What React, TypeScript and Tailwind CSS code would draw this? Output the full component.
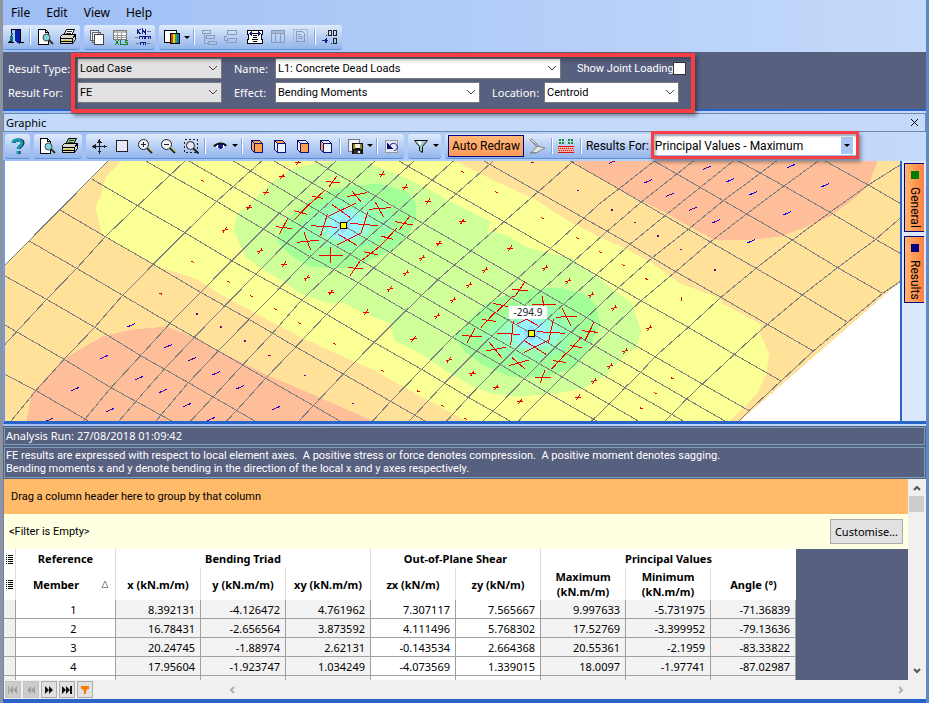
import type { ReactNode } from "react";

const UI = "font-['Noto_Sans','Open_Sans',sans-serif]";
const NARROW = "font-['Roboto','Noto_Sans',sans-serif]";

/* ---------- toolbar icons, drawn on a 18 x 18 grid ---------- */

function Ico({ children, w = 18 }: { children: ReactNode; w?: number }) {
  return (
    <svg width={w} height="18" viewBox={`0 0 ${w} 18`} fill="none" shapeRendering="crispEdges" aria-hidden="true" className="shrink-0">
      {children}
    </svg>
  );
}

const ExitIcon = () => (
  <Ico>
    <path d="M4.500 12V1.500h9V14" stroke="#000" />
    <path d="M5 2h8v11H5z" fill="#9fd0f4" />
    <path d="M8 2h5v14l-5-3z" fill="#0a1fa8" />
    <path d="M3 8h3v6H3zM4 5h2v2H4z" fill="#0c6f78" />
    <path d="M1 14.500h6M12 14.500h5M2 13.500h2" stroke="#000" />
  </Ico>
);
const PreviewIcon = () => (
  <Ico>
    <path d="M2.500 1.500h7l3 3v12h-10z" fill="#fff" stroke="#000" />
    <path d="M9.500 1.500v3h3" stroke="#000" />
    <circle cx="10.500" cy="9.500" r="3.500" fill="#7fd4dc" stroke="#444" shapeRendering="auto" />
    <path d="M13 12l4 4" stroke="#333" strokeWidth="2" shapeRendering="auto" />
  </Ico>
);
const PrinterIcon = ({ paper = "#fff" }: { paper?: string }) => (
  <Ico>
    <path d="M4.500 7.500l3-6h8l-3 6z" fill={paper} stroke="#000" shapeRendering="auto" />
    <path d="M8 3.500h5M7 5.500h5" stroke="#333" />
    <path d="M1.500 8.500l2-2h13v5l-3 4h-12z" fill="#d9d6c8" stroke="#000" shapeRendering="auto" />
    <path d="M1.500 10.500h12l3-4M2 13.500h11M13.500 10.500v5" stroke="#000" />
    <path d="M4 12h6v1H4z" fill="#d8c800" />
    <path d="M3 15h10v1H3z" fill="#000" />
  </Ico>
);
const CopyIcon = () => (
  <Ico>
    <path d="M2.500 2.500h8v10h-8zM4.500 4.500h8v10h-8z" fill="#e9f1fd" stroke="#666" />
    <path d="M6.500 6.500h9v10h-9z" fill="#fff" stroke="#444" />
  </Ico>
);
const XlsIcon = () => (
  <Ico>
    <path d="M2.500 2.500h13v9h-13z" fill="#fff" stroke="#777" />
    <path d="M3 3h12v2H3z" fill="#b9b9b9" />
    <path d="M3 7.500h12M3 9.500h12M6.500 5v6M10.500 5v6" stroke="#999" />
    <path d="M4 12l4 5M8 12l-4 5M9.500 12v4.500h3M17 12.500h-3v2h2.500v2H13" stroke="#0a8a1e" />
  </Ico>
);
const UnitsIcon = () => (
  <Ico>
    <path d="M3.500 1v5M6.500 1l-3 2 3 3M8.500 6V1l3 5V1" stroke="#1a1a8c" />
    <path d="M13 3.500h4M1 9.500h3M2 15.500h3M13 15.500h3" stroke="#777" />
    <path d="M5.500 11V8.500h5V11M8 9v2M11.500 11V8.500h5V11M14 9v2M6.500 17v-2.500h5V17M9 15v2" stroke="#1a1a8c" />
  </Ico>
);
const PaletteIcon = () => (
  <Ico>
    <path d="M1.500 2.500h12v12h-12z" fill="#fff" stroke="#000" />
    <path d="M7 5h3v10H7z" fill="#e03a18" />
    <path d="M10 5h2v10h-2z" fill="#f4d800" />
    <path d="M12 5h2v10h-2z" fill="#19b33a" />
    <path d="M14 5h2v10h-2z" fill="#1c6fd8" />
    <path d="M7 5.500h9v10H7z" stroke="#000" />
  </Ico>
);
const TreeIcon = () => (
  <Ico>
    <path d="M2.500 2.500h8v3h-8zM6.500 7.500h8v3h-8zM8.500 13.500h8v3h-8zM4.500 6v9h4M4.500 9.500h2" stroke="#8b9bb8" />
  </Ico>
);
const SplitIcon = () => (
  <Ico>
    <path d="M4.500 2.500h9v4h-9zM4.500 10.500h9v4h-9zM4 8.500H1.500v4H4" stroke="#8b9bb8" />
  </Ico>
);
const FitIcon = () => (
  <Ico>
    <path d="M1.500 2.500h15v4h-1v5h1v4h-15v-4h1v-5h-1z" fill="#fff" stroke="#000" />
    <path d="M6 5.500h6M7 7.500h4M7 9.500h4M6 11.500h6M7 13.500h4" stroke="#000" />
    <path d="M6 3v5L3 5.500zM12 3v5l3-2.500z" fill="#1a1a8c" />
  </Ico>
);
const ColumnsIcon = () => (
  <Ico>
    <path d="M2.500 2.500h13v12h-13zM2 5.500h14M6.500 6v9M11.500 6v9" stroke="#8b9bb8" />
    <path d="M3 3h12v2H3z" fill="#a9b8d3" />
  </Ico>
);
const ReportIcon = () => (
  <Ico>
    <path d="M1.500 1.500h14v14h-14z" stroke="#a9b8d3" />
    <path d="M4.500 3.500h6l2 2v8h-8zM6 6.500h3M6 8.500h5M6 10.500h5" stroke="#8b9bb8" />
  </Ico>
);
const DecimalIcon = () => (
  <Ico>
    <path d="M5 7.500h1M7.500 2.500h3v5h-3zM12.500 2.500h3v5h-3zM12.500 10.500h3v5h-3zM10 15.500h1" stroke="#222" />
    <path d="M1 12.500h6M5.500 10v5M4.500 10.500v4" stroke="#1a1a8c" />
  </Ico>
);
const HelpIcon = () => (
  <Ico>
    <path d="M5 6c0-4 9-4 9 0 0 3-4 3-4 6M10 14v3" stroke="#113" strokeWidth="3" shapeRendering="auto" />
    <path d="M4 6c0-4 9-4 9 0 0 3-4 3-4 6M9 14v3" stroke="#129aa6" strokeWidth="3" shapeRendering="auto" />
  </Ico>
);
const MoveIcon = () => (
  <Ico>
    <path d="M9.500 4v11M4 9.500h11" stroke="#222" />
    <path d="M8 5h3L9.500 3zM8 14h3l-1.500 2zM5 8v3L3 9.500zM14 8v3l2-1.500z" fill="#222" stroke="#222" strokeWidth="1" />
  </Ico>
);
const RectIcon = () => (
  <Ico>
    <path d="M3.500 3.500h11v11h-11z" fill="#e6e6fa" stroke="#222" />
  </Ico>
);
const ZoomIcon = ({ plus }: { plus: boolean }) => (
  <Ico>
    <circle cx="7.500" cy="7.500" r="5" fill="#eef3fd" stroke="#222" shapeRendering="auto" />
    <path d={plus ? "M5 7.500h5M7.500 5v5" : "M5 7.500h5"} stroke="#222" />
    <path d="M11 11l5 5" stroke="#222" strokeWidth="2" shapeRendering="auto" />
    <path d="M12 10.500l4.500 4.500" stroke="#d8c800" shapeRendering="auto" />
  </Ico>
);
const ZoomAreaIcon = () => (
  <Ico>
    <path d="M2.500 2.500h13v13h-13z" stroke="#222" strokeDasharray="2 2" />
    <circle cx="8.500" cy="8.500" r="4" fill="#e6e6fa" stroke="#222" shapeRendering="auto" />
    <path d="M11.500 11.500l5 5" stroke="#222" strokeWidth="2" shapeRendering="auto" />
  </Ico>
);
const EyeIcon = () => (
  <Ico>
    <path d="M2 9c3-4 10-5 14-1l-2 2c-2-2-7-3-10 0z" fill="#111" shapeRendering="auto" />
    <path d="M5 10c2 3 6 3 9 0l-1-2H6z" fill="#fff" />
    <circle cx="9.500" cy="9.500" r="2.500" fill="#111a8c" shapeRendering="auto" />
  </Ico>
);
type Face = "all" | "top" | "front" | "left";
const CubeIcon = ({ face }: { face: Face }) => {
  const o = "#ffa050";
  return (
    <Ico>
      <path d="M3 4l3 3h9l-3-4H5z" fill={face === "all" || face === "top" ? o : "#eaf1fd"} />
      <path d="M3 4l3 3v9l-3-3z" fill={face === "all" || face === "left" ? o : "#eaf1fd"} />
      <path d="M6 7h9v8H6z" fill={face === "all" || face === "front" ? o : "#eaf1fd"} />
      <path d="M6.500 6.500h8v9h-8zM3.500 3.500l3 3M3.500 3.500v9l3 3M3.500 3.500h8l3 3" stroke="#10107c" />
    </Ico>
  );
};
const SaveIcon = () => (
  <Ico>
    <path d="M2.500 2.500h11v12h-11z" fill="#eef3fd" stroke="#777" />
    <path d="M6 6h11v11H6z" fill="#111" />
    <path d="M7 7h2v5H7zM14 7h2v5h-2z" fill="#8a8a14" />
    <path d="M9 7h5v4H9z" fill="#eee" />
    <path d="M8 13h7v4H8z" fill="#333" />
    <path d="M12 14h2v2h-2z" fill="#fff" />
  </Ico>
);
const UndoIcon = () => (
  <Ico>
    <path d="M2.500 3.500h12v12h-12z" fill="#e6e6fa" stroke="#999" />
    <path d="M6 9.500c2-4 7-4 8-1 1 3-1 5-3 5" stroke="#10107c" shapeRendering="auto" />
    <path d="M4 6v6h6z" fill="#10107c" />
  </Ico>
);
const FilterIcon = () => (
  <Ico>
    <path d="M2.500 3.500h13l-5 6v6l-3-2v-4z" fill="#9bc9c9" stroke="#111" shapeRendering="auto" />
    <path d="M5 4.500h5l-2 4z" fill="#fff" shapeRendering="auto" />
  </Ico>
);
const BrushIcon = () => (
  <Ico>
    <path d="M2 3l2-1 6 6-1 2zM9 9l8 2-9 5H2c3-1 4-3 7-7z" fill="#e3e3e3" stroke="#888" shapeRendering="auto" />
    <path d="M2 3.500l8 5.500M3 15.500h6" stroke="#888" shapeRendering="auto" />
  </Ico>
);
const LoadIcon = () => (
  <Ico>
    <path d="M2 2h2v2H2zM5 2h2v2H5zM11 2h2v2h-2zM14 2h2v2h-2zM2 5h2v2H2zM5 5h2v2H5zM11 5h2v2h-2zM14 5h2v2h-2z" fill="#168a2a" />
    <path d="M1 9h16v7H1z" fill="#f3b0a8" />
    <path d="M1 9.500h16M1 15.500h16" stroke="#d11" />
    <path d="M1 11.500h16M2 13.500h16" stroke="#d11" strokeDasharray="1 1" />
  </Ico>
);

/* ---------- small building blocks ---------- */

function ToolGroup({ children }: { children: ReactNode }) {
  return (
    <div className="flex h-[25px] items-center rounded-[3px] border-b border-[#5e8fda] bg-gradient-to-b from-[#dfeafc] to-[#92b5ec] px-px">
      {children}
    </div>
  );
}
function Tool({ label, children }: { label: string; children: ReactNode }) {
  return (
    <button type="button" aria-label={label} className="flex h-6 w-[23px] shrink-0 items-center justify-center">
      {children}
    </button>
  );
}
function DropArrow({ label }: { label: string }) {
  return (
    <button type="button" aria-label={label} className="flex h-6 w-2 shrink-0 items-center justify-center">
      <svg width="6" height="3" viewBox="0 0 6 3" aria-hidden="true"><path d="M0 0h6L3 3z" fill="#000" /></svg>
    </button>
  );
}
const Sep = () => <span className="mx-[2px] h-4 w-[2px] shrink-0 border-l border-[#86a5d8] bg-white" />;

function Combo({ id, value, tone, width }: { id: string; value: string; tone: "grey" | "white"; width: string }) {
  return (
    <div className={`relative ${width}`}>
      <select
        id={id}
        defaultValue={value}
        className={`${NARROW} h-[21px] w-full appearance-none border border-[#7a7a7a] pl-[2px] text-[11px] leading-4 text-black ${tone === "grey" ? "bg-[#e1e1e1]" : "bg-white"}`}
      >
        <option>{value}</option>
      </select>
      <svg className="pointer-events-none absolute top-[7px] right-1" width="10" height="7" viewBox="0 0 10 7" fill="none" aria-hidden="true">
        <path d="M1 1l4 4 4-4" stroke="#444" />
      </svg>
    </div>
  );
}

/* ---------- contour plot ---------- */

const gridLines = [
  "15,643 110,693 265,783",
  "15,495 192,598 333,683 515,783",
  "15,348 140,418 284,502 422,587 565,668 765,783",
  "88,243 230,325 368,406 510,490 655,573 797,655 940,737 1020,783",
  "180,150 316,230 460,313 602,397 747,478 900,568 1030,642 1172,724 1275,783",
  "277,58 413,137 555,218 695,302 840,383 980,463 1122,547 1265,628 1405,712 1530,783",
  "437,3 650,124 790,207 930,290 1075,368 1218,452 1358,532 1500,613 1640,697 1790,783",
  "567,3 838,160 1827,732 1915,783",
  "700,3 1030,197 1594,520 1875,683 2050,783",
  "822,3 1922,637 2060,717 2175,783",
  "944,3 1828,512 1965,590 2107,672 2247,752",
  "1197,3 1855,383 1923,422 2065,502 2203,583 2343,663",
  "1452,3 1890,253 2027,335 2163,412 2302,493 2440,573",
  "1710,3 1862,90 2065,208 2268,325 2407,405 2543,487",
  "1963,3 2170,122 2377,240 2513,323 2648,400",
  "2215,3 2352,78 2490,157 2627,238 2700,280",
  "2475,3 2605,75 2700,130",
  "327,0 15,315",
  "555,3 413,137 316,230 230,325 140,418 50,515 15,553",
  "785,3 650,124 555,218 460,313 368,406 284,502 192,598 108,692 33,783",
  "1008,3 838,160 695,302 602,397 510,490 422,587 333,683 250,783",
  "1125,3 908,200 768,342 675,437 583,532 494,626 407,725 357,783",
  "1242,3 1030,197 930,290 840,383 747,478 655,573 565,668 468,783",
  "1360,3 1100,237 1003,328 905,420 820,517 728,615 640,710 572,783",
  "1480,3 1170,277 1075,368 980,463 890,558 797,655 711,750 680,783",
  "1720,3 1318,355 1218,452 1122,547 1030,642 940,737 897,783",
  "1963,3 1855,88 1800,130 1460,440 1358,532 1265,628 1172,724 1118,783",
  "2080,3 1925,125 1820,215 1525,480 1430,572 1335,668 1228,783",
  "2200,3 1995,167 1890,253 1594,520 1500,613 1405,712 1340,783",
  "2330,3 2170,122 2065,208 1958,292 1855,383 1665,562 1450,783",
  "2455,3 2352,78 2240,162 2132,245 2027,335 1923,422 1828,512 1735,602 1640,697 1555,783",
  "2700,15 2605,75 2490,157 2377,240 2268,325 2163,412 2065,502 1965,590 1922,637 1875,683 1827,732 1775,783",
  "2700,175 2627,238 2513,323 2407,405 2302,493 2203,583 2107,672 2060,717 1995,783",
  "2700,365 2648,400 2543,487 2440,573 2343,663 2247,752 2218,783",
];

const crosses: [number, number][] = [
  [893, 8], [846, 50], [798, 97], [746, 142], [674, 210], [780, 273], [852, 313], [920, 354],
  [1146, 43], [1215, 82], [1284, 124], [1387, 184], [1316, 250], [1266, 294], [1218, 339], [1169, 387],
  [1098, 457], [992, 397], [1455, 330], [1407, 375], [1359, 420], [1311, 468], [1240, 537], [1346, 600],
  [1417, 640], [1488, 683], [1560, 725], [1530, 265], [1635, 324], [1704, 363], [1773, 405], [1734, 712],
  [1782, 663], [1842, 444], [1947, 504], [1875, 573], [1830, 618],
];
const ticks: [number, number][] = [
  [606, 62], [577, 305], [482, 401], [686, 366], [753, 408], [825, 447], [897, 489], [1386, 35], [1488, 96],
  [1626, 174], [1731, 234], [1800, 276], [1002, 551], [1146, 632], [1254, 694], [1326, 737], [1397, 777],
  [1869, 315], [1939, 357], [2016, 655], [1967, 700], [1923, 745],
];
const specks: [number, number][] = [
  [590, 462], [662, 501], [734, 543], [808, 587], [914, 646], [1597, 8], [1734, 92], [1059, 730],
  [1836, 150], [1904, 188], [1974, 228], [2043, 269], [2144, 330],
];
const strokes: [number, number][] = [
  [393, 496], [503, 559], [312, 591], [575, 598], [417, 654], [648, 640], [225, 687], [488, 693], [720, 682],
  [330, 750], [561, 735], [828, 744], [633, 777], [146, 780], [1839, 5], [1944, 64], [2010, 104], [2079, 146],
  [2148, 184], [2253, 244], [2121, 23], [2190, 61], [2259, 100], [2361, 160], [2373, 18], [2475, 76],
];
const bigCrosses =
  "M0 160L75 90M35 108L68 115M78 65L120 68M88 80L110 48M155 92L183 125M140 110L200 98M225 125L250 170M207 148L272 143M95 133L150 172M88 167L167 130M82 163L62 227M33 197L110 202M203 157L183 220M150 190L233 197M112 255L187 217M113 222L172 257M12 217L32 270M-8 247L57 240M92 262V308M57 287H128M182 300L150 347M143 323L188 326M187 300L242 257M192 275L233 285M242 257L290 205M242 228L280 238M330 168L297 210M285 185L338 195M30 130L-18 180M-18 152L22 163M-38 178L-62 222M-72 200L-24 206" +
  "M675 365L643 412M637 388L683 392M590 455L640 408M580 430L625 440M587 455L543 502M545 478L587 484M728 408L730 440M697 433H768M787 445L813 497M768 472L833 468M882 487L855 542M845 512L893 517M640 483L632 555M592 520L660 523M760 478L745 550M712 515L795 520M650 492L680 478L715 497M672 578L748 540M673 542L738 583M568 547L605 593M558 573L617 562M635 592L675 627M627 617L687 600M525 505L500 550M487 527L545 530M735 630L720 670M705 652H752M755 627L800 578M760 602L797 607M803 578L845 530M810 557L845 563";

function Plot() {
  return (
    <svg viewBox="15 3 2685 780" preserveAspectRatio="xMidYMid slice" className="block h-full w-full bg-white" fill="none" shapeRendering="crispEdges" role="img" aria-label="Bending moment contours">
      <path d="M327 0H2700V365L2220 783H15V315z" fill="#ffe19a" />
      <path d="M1710 0L1862 90L1930 125L2000 160L2070 200L2145 240H2250L2340 230L2420 200L2490 170L2570 110L2605 75L2615 50L2634 0z" fill="#ffbe9a" />
      <path d="M80 783L95 700L190 598L310 528L400 508L500 500L585 533L655 572L800 645L900 687L1010 735L1120 783z" fill="#ffbe9a" />
      <path d="M368 0L318 50L305 100L286 142L305 218L315 232L460 315L590 357L670 408L820 488L900 530L1030 590L1125 632L1245 700L1400 783H2188L2230 745L2270 700L2300 640L2307 580L2278 515L2283 493L2170 432L2160 415L2040 370L1950 305L1860 258L1800 232L1700 180L1610 120L1500 70L1450 45L1360 0z" fill="#faff96" />
      <path d="M1085 0L945 10L870 30L805 75L750 130L712 160L702 210L735 290L800 335L860 370L900 400L990 432L1025 425L1080 455L1170 490L1183 540L1270 585L1340 635L1420 680L1470 700L1550 710L1670 700L1750 685L1800 658L1820 645L1860 600L1910 560L1923 510L1895 430L1800 358L1715 295L1630 275L1580 262L1520 225L1475 215L1462 220L1470 185L1350 125L1300 95L1220 55L1130 20z" fill="#cfff98" />
      <path d="M832 235L850 190L930 120L1000 88L1070 75L1140 72L1220 95L1248 130V170L1230 215L1190 265L1110 300L1070 325H1000L930 320L870 285L835 250z" fill="#a2ff98" />
      <path d="M1365 530L1400 490L1460 430L1560 390L1680 383L1760 405L1790 440L1800 490L1770 560L1730 620L1640 650H1530L1440 610L1390 570z" fill="#a2ff98" />
      <path d="M900 200L930 165L985 120L1060 110L1150 125L1178 170L1172 215L1130 245L1050 270L960 260L910 230z" fill="#98ffac" />
      <path d="M1440 530L1500 480L1580 445L1660 440L1710 475L1720 530L1690 575L1610 605L1530 600L1470 570z" fill="#98ffac" />
      <path d="M950 195L985 155L1040 140L1100 155L1120 195L1100 225L1040 245L980 235z" fill="#98ffd4" />
      <path d="M1500 525L1540 485L1600 465L1660 485L1690 520L1660 555L1600 570L1540 560z" fill="#98ffd4" />
      <path d="M985 197L1000 165L1035 152L1070 165L1085 197L1070 230L1035 242L1000 230zM1545 520L1560 488L1595 475L1632 488L1645 520L1632 550L1595 563L1560 550z" fill="#98f6ff" />
      <path d="M1005 197L1030 175L1055 197L1030 220zM1570 520L1594 497L1620 520L1594 545z" fill="#99d9ff" />
      {gridLines.map((p) => (
        <polyline key={p} points={p} stroke="#7f7f7f" strokeWidth="3" />
      ))}
      <g stroke="#f00000" strokeWidth="3">
        {crosses.map(([x, y]) => (
          <path key={`${x}-${y}`} d={`M${x - 9} ${y + 1}L${x + 10} ${y - 1}M${x + 6} ${y - 8}L${x - 5} ${y + 8}`} />
        ))}
        {ticks.map(([x, y]) => (
          <path key={`${x}-${y}`} d={`M${x - 4} ${y - 2}L${x + 5} ${y + 2}`} />
        ))}
        <path d="M2044 411V423" />
        <path d={bigCrosses} transform="translate(900 0)" />
      </g>
      {specks.map(([x, y]) => (
        <g key={`${x}-${y}`}>
          <path d={`M${x - 3} ${y}h3`} stroke="#0000f0" strokeWidth="4" />
          <path d={`M${x} ${y}h4`} stroke="#f00000" strokeWidth="4" />
        </g>
      ))}
      {strokes.map(([x, y]) => (
        <g key={`${x}-${y}`}>
          <path d={`M${x - 11} ${y + 5}L${x + 12} ${y - 5}`} stroke="#0000f0" strokeWidth="3" />
          {x < 2160 && <path d={`M${x - 3} ${y + 1}L${x + 3} ${y - 1}`} stroke="#f00000" strokeWidth="3" />}
        </g>
      ))}
      <path d="M1021 188h18v18h-18zM1585 511h18v18h-18z" fill="#ffff00" stroke="#000" strokeWidth="3" />
      <path d="M1527 438h114v39h-114z" fill="#fff" />
      <text x="1584" y="468" textAnchor="middle" fontSize="30" fill="#222" className={UI}>-294.9</text>
    </svg>
  );
}

/* ---------- results table ---------- */

const rows: string[][] = [
  ["1", "8.392131", "-4.126472", "4.761962", "7.307117", "7.565667", "9.997633", "-5.731975", "-71.36839"],
  ["2", "16.78431", "-2.656564", "3.873592", "4.111496", "5.768302", "17.52769", "-3.399952", "-79.13636"],
  ["3", "20.24745", "-1.88974", "2.62131", "-0.143534", "2.664368", "20.55361", "-2.1959", "-83.33822"],
  ["4", "17.95604", "-1.923747", "1.034249", "-4.073569", "1.339015", "18.0097", "-1.97741", "-87.02987"],
  ["", "", "", "", "", "", "", "", ""],
];
const heads: string[][] = [
  ["x (kN.m/m)"], ["y (kN.m/m)"], ["xy (kN.m/m)"], ["zx (kN/m)"], ["zy (kN/m)"],
  ["Maximum", "(kN.m/m)"], ["Minimum", "(kN.m/m)"], ["Angle (°)"],
];

const ListMark = () => (
  <svg width="8" height="10" viewBox="0 0 8 10" shapeRendering="crispEdges" className="mx-auto" aria-hidden="true">
    <path d="M0 1.500h1M2 1.500h5M0 3.500h1M2 3.500h5M0 5.500h1M2 5.500h5M0 7.500h1M2 7.500h5M0 9.500h1M2 9.500h5" stroke="#000" />
  </svg>
);

function ResultsTable() {
  return (
    <table className="w-[792px] shrink-0 table-fixed border-separate border-spacing-0 text-[11px] leading-[15px] text-black">
      <colgroup>
        <col className="w-3" />
        <col className="w-[100px]" />
        {heads.map((h, i) => <col key={i} className="w-[85px]" />)}
      </colgroup>
      <thead className="bg-white">
        <tr className="h-[19px]">
          <th className="border-r border-[#dcdcdc] p-0"><ListMark /></th>
          <th className="border-r border-[#dcdcdc] p-0">Reference</th>
          <th colSpan={3} className="border-r border-[#dcdcdc] p-0">Bending Triad</th>
          <th colSpan={2} className="border-r border-[#dcdcdc] p-0">Out-of-Plane Shear</th>
          <th colSpan={3} className="p-0">Principal Values</th>
        </tr>
        <tr className="h-8">
          <th className="border-r border-[#dcdcdc] p-0"><ListMark /></th>
          <th className="border-r border-[#dcdcdc] p-0">
            <span className="flex items-center pl-[17px]">
              Member
              <svg width="8" height="8" viewBox="0 0 8 8" fill="none" className="ml-auto mr-1.5" aria-hidden="true"><path d="M1 7.500L4 1l3 6.500z" stroke="#888" /></svg>
            </span>
          </th>
          {heads.map((h, i) => (
            <th key={i} className={`p-0 ${i < 7 ? "border-r border-[#dcdcdc]" : ""}`}>
              {h.map((line) => <span key={line} className="block">{line}</span>)}
            </th>
          ))}
        </tr>
      </thead>
      <tbody>
        {rows.map((r, n) => (
          <tr key={n} className="h-[19px]">
            <td className="border-r border-b border-[#a0a0a0] bg-[#f0f0f0] p-0" />
            {r.map((v, i) => (
              <td
                key={i}
                className={`border-r border-b border-[#a0a0a0] p-0 ${i === 0 ? "pl-4 text-center" : "pr-[5px] text-right"} ${(i > 0 && i < 4) || i > 5 ? "bg-[#f3f3f3]" : "bg-white"}`}
              >
                {v}
              </td>
            ))}
          </tr>
        ))}
      </tbody>
    </table>
  );
}

function NavButton({ label, d, tone }: { label: string; d: string; tone: "off" | "on" | "filter" }) {
  return (
    <button
      type="button"
      aria-label={label}
      className={`flex h-[17px] w-4 items-center justify-center border ${tone === "off" ? "border-[#c4c4c4] bg-[#cccccc]" : "border-[#adadad] bg-[#e1e1e1]"}`}
    >
      <svg width="10" height="8" viewBox="0 0 10 8" className="shrink-0" aria-hidden="true">
        <path d={d} fill={tone === "off" ? "#a0a0a0" : tone === "on" ? "#111" : "#f57c00"} />
      </svg>
    </button>
  );
}

function VTab({ label, swatch, size }: { label: string; swatch: string; size: string }) {
  return (
    <button type="button" className={`flex w-5 flex-col items-center border border-r-0 border-[#000080] bg-gradient-to-r from-[#ffb56b] to-[#ff8040] pt-[7px] ${size}`}>
      <span className={`mb-2 size-2 shrink-0 ${swatch}`} />
      <span className={`${NARROW} text-[12px] leading-4 text-black [writing-mode:vertical-rl]`}>{label}</span>
    </button>
  );
}

export default function App() {
  return (
    <div className={`${UI} flex h-screen min-h-[640px] flex-col overflow-hidden border-x-[3px] border-y-0 border-l-[#8d949f] border-r-[#5f87c9] bg-gradient-to-r from-[#9ebef5] to-[#c4dafa] text-[11px] text-black`}>
      <nav className="flex h-[25px] shrink-0 items-center gap-4 pl-2 text-[12px] leading-4" aria-label="Main menu">
        <button type="button">File</button>
        <button type="button">Edit</button>
        <button type="button">View</button>
        <button type="button">Help</button>
      </nav>

      <div className="flex h-[27px] shrink-0 items-start gap-1">
        <ToolGroup>
          <Tool label="Exit"><ExitIcon /></Tool><Sep />
          <Tool label="Print preview"><PreviewIcon /></Tool>
          <Tool label="Print"><PrinterIcon /></Tool>
        </ToolGroup>
        <ToolGroup>
          <Tool label="Copy"><CopyIcon /></Tool>
          <Tool label="Export to XLS"><XlsIcon /></Tool>
          <Tool label="Units"><UnitsIcon /></Tool>
        </ToolGroup>
        <ToolGroup>
          <Tool label="Colours"><PaletteIcon /></Tool>
          <DropArrow label="Colour options" /><Sep />
          <Tool label="Group rows"><TreeIcon /></Tool>
          <Tool label="Split"><SplitIcon /></Tool>
          <Tool label="Best fit"><FitIcon /></Tool>
          <Tool label="Columns"><ColumnsIcon /></Tool>
          <Tool label="Report"><ReportIcon /></Tool><Sep />
          <Tool label="Decimal places"><DecimalIcon /></Tool>
        </ToolGroup>
      </div>

      <form className="relative flex shrink-0 flex-col gap-[3px] border-b-2 border-[#2864c8] bg-[#586080] pt-1.5 pb-1.5 pl-[5px] leading-4 text-white">
        <div className="flex items-center">
          <label htmlFor="type" className="w-[69px]">Result Type:</label>
          <Combo id="type" value="Load Case" tone="grey" width="w-[145px]" />
          <label htmlFor="name" className="w-[53px] pl-3">Name:</label>
          <Combo id="name" value="L1: Concrete Dead Loads" tone="white" width="w-[286px]" />
          <label htmlFor="joint" className={`${NARROW} w-28 pl-4 whitespace-nowrap`}>Show Joint Loading</label>
          <input id="joint" type="checkbox" className="size-[13px] appearance-none border border-[#333] bg-white" />
        </div>
        <div className="flex items-center">
          <label htmlFor="for" className="w-[69px]">Result For:</label>
          <Combo id="for" value="FE" tone="grey" width="w-[145px]" />
          <label htmlFor="effect" className="w-[53px] pl-3">Effect:</label>
          <Combo id="effect" value="Bending Moments" tone="white" width="w-[205px]" />
          <label htmlFor="loc" className="w-16 pl-3">Location:</label>
          <Combo id="loc" value="Centroid" tone="white" width="w-[135px]" />
        </div>
        <span className="pointer-events-none absolute top-px left-[68px] z-10 h-[60px] w-[624px] border-4 border-[#f83e42] shadow-[2px_3px_4px_rgba(0,0,0,0.4),inset_2px_3px_4px_rgba(0,0,0,0.3)]" />
      </form>

      <div className="mt-[2px] flex h-[19px] shrink-0 items-center justify-between border border-[#7088a8] bg-[#c4dafa] pr-1.5 pl-[2px]">
        <h2 className="leading-4">Graphic</h2>
        <button type="button" aria-label="Close">
          <svg width="9" height="9" viewBox="0 0 9 9" aria-hidden="true"><path d="M1 1l7 7M8 1L1 8" stroke="#000" /></svg>
        </button>
      </div>

      <div className="flex h-7 shrink-0 items-center gap-1 pl-[2px]">
        <ToolGroup><Tool label="Help"><HelpIcon /></Tool></ToolGroup>
        <ToolGroup>
          <Tool label="Print preview"><PreviewIcon /></Tool>
          <Tool label="Print"><PrinterIcon paper="#8fd08f" /></Tool>
        </ToolGroup>
        <ToolGroup>
          <Tool label="Pan"><MoveIcon /></Tool>
          <Tool label="Extents"><RectIcon /></Tool>
          <Tool label="Zoom in"><ZoomIcon plus /></Tool>
          <Tool label="Zoom out"><ZoomIcon plus={false} /></Tool>
          <Tool label="Zoom window"><ZoomAreaIcon /></Tool><Sep />
          <Tool label="Visibility"><EyeIcon /></Tool>
          <DropArrow label="Visibility options" /><Sep />
          <Tool label="Isometric"><CubeIcon face="all" /></Tool>
          <Tool label="Top"><CubeIcon face="top" /></Tool>
          <Tool label="Front"><CubeIcon face="front" /></Tool>
          <Tool label="Side"><CubeIcon face="left" /></Tool><Sep />
          <Tool label="Save picture"><SaveIcon /></Tool>
          <DropArrow label="Save options" /><Sep />
          <Tool label="Undo"><UndoIcon /></Tool>
        </ToolGroup>
        <ToolGroup>
          <Tool label="Filter"><FilterIcon /></Tool>
          <DropArrow label="Filter options" />
        </ToolGroup>
        <ToolGroup>
          <button type="button" className={`${NARROW} mx-[2px] h-[22px] shrink-0 border border-[#000080] bg-gradient-to-b from-[#ffb978] to-[#ff9a58] px-[3px] text-[12px] leading-4`}>Auto Redraw</button>
          <Tool label="Redraw"><BrushIcon /></Tool><Sep />
          <Tool label="Loading"><LoadIcon /></Tool><Sep />
          <label htmlFor="results" className={`${NARROW} pr-1 pl-[2px] text-[12px] leading-4`}>Results For:</label>
          <div className="relative w-[204px]">
            <select id="results" defaultValue="m" className={`${NARROW} h-[19px] w-full appearance-none bg-white pl-[2px] text-[12px] leading-4`}>
              <option value="m">Principal Values - Maximum</option>
            </select>
            <span className="pointer-events-none absolute top-px right-1 flex h-[17px] w-3 items-center justify-center bg-[#a9c6f4]">
              <svg width="6" height="3" viewBox="0 0 6 3" aria-hidden="true"><path d="M0 0h6L3 3z" fill="#000" /></svg>
            </span>
            <span className="pointer-events-none absolute -inset-x-[2px] -top-[5px] -bottom-1 z-10 border-[3px] border-[#f83e42] shadow-[2px_3px_4px_rgba(0,0,0,0.4),inset_2px_2px_3px_rgba(0,0,0,0.3)]" />
          </div>
        </ToolGroup>
      </div>

      <div className="flex min-h-0 flex-1 border-b-[3px] border-l-2 border-[#2864c8] border-l-[#6f9be4] pt-px">
        <div className="min-w-0 flex-1 border-r-2 border-[#2864c8]"><Plot /></div>
        <div className="flex w-6 flex-col items-end gap-1 bg-[#dce9fd] pt-[2px] pr-[2px]">
          <VTab label="General" swatch="bg-[#008000]" size="h-[69px]" />
          <VTab label="Results" swatch="bg-[#000080]" size="h-[67px]" />
        </div>
      </div>

      <section className="mt-[2px] flex shrink-0 flex-col border-b-4 border-[#2864c8]">
        <div className="flex flex-col gap-[2px] border border-[#586080] bg-[#586080] text-white">
          <p className="border border-[#7aa0c0] px-px leading-4">Analysis Run: 27/08/2018 01:09:42</p>
          <div className={`${NARROW} border border-[#7aa0c0] px-px pt-px pb-[2px] leading-[13px]`}>
            <p>FE results are expressed with respect to local element axes.&nbsp; A positive stress or force denotes compression.&nbsp; A positive moment denotes sagging.</p>
            <p>Bending moments x and y denote bending in the direction of the local x and y axes respectively.</p>
          </div>
        </div>
        <div className="flex border-l border-[#6f87b0] bg-[#f0f0f0]">
          <div className="min-w-0 flex-1">
            <p className={`${NARROW} flex h-[35px] items-center bg-[#ffbb6a] pl-[7px] leading-4`}>Drag a column header here to group by that column</p>
            <div className="flex h-[35px] items-center justify-between bg-[#ffffe1] pr-[5px] pl-[5px] leading-4">
              <span className={NARROW}>&lt;Filter is Empty&gt;</span>
              <button type="button" className="h-[25px] border border-[#adadad] bg-[#e1e1e1] px-1 leading-4">Customise...</button>
            </div>
            <div className="flex h-[131px] overflow-hidden bg-[#586080]"><ResultsTable /></div>
          </div>
          <div className="flex w-[18px] flex-col items-center bg-[#f0f0f0] pt-1.5 pr-px pb-1.5">
            <svg width="8" height="6" viewBox="0 0 8 6" fill="none" aria-hidden="true"><path d="M1 5l3-3 3 3" stroke="#555" strokeWidth="2" /></svg>
            <span className="mt-[5px] h-4 w-[15px] bg-[#cdcdcd]" />
            <svg className="mt-auto" width="8" height="6" viewBox="0 0 8 6" fill="none" aria-hidden="true"><path d="M1 1l3 3 3-3" stroke="#555" strokeWidth="2" /></svg>
          </div>
        </div>
        <div className="flex h-[19px] items-center gap-[2px] border-l border-[#6f87b0] bg-[#f0f0f0] pl-px">
          <NavButton label="First" tone="off" d="M0 0h1v8H0zM5 0v8L1 4zM9 0v8L5 4z" />
          <NavButton label="Previous" tone="off" d="M5 0v8L1 4zM9 0v8L5 4z" />
          <NavButton label="Next" tone="on" d="M1 0v8l4-4zM5 0v8l4-4z" />
          <NavButton label="Last" tone="on" d="M0 0v8l4-4zM4 0v8l4-4zM8 0h2v8H8z" />
          <NavButton label="Filter rows" tone="filter" d="M1 0h8v3H1zM3 3h4v1L6 5v3H4V5L3 4z" />
          <div className="ml-[134px] flex flex-1 items-center justify-between pr-[22px]">
            <svg width="7" height="8" viewBox="0 0 7 8" fill="none" aria-hidden="true"><path d="M5 1L2 4l3 3" stroke="#b0b0b0" strokeWidth="2" /></svg>
            <svg width="7" height="8" viewBox="0 0 7 8" fill="none" aria-hidden="true"><path d="M2 1l3 3-3 3" stroke="#b0b0b0" strokeWidth="2" /></svg>
          </div>
        </div>
      </section>
    </div>
  );
}
